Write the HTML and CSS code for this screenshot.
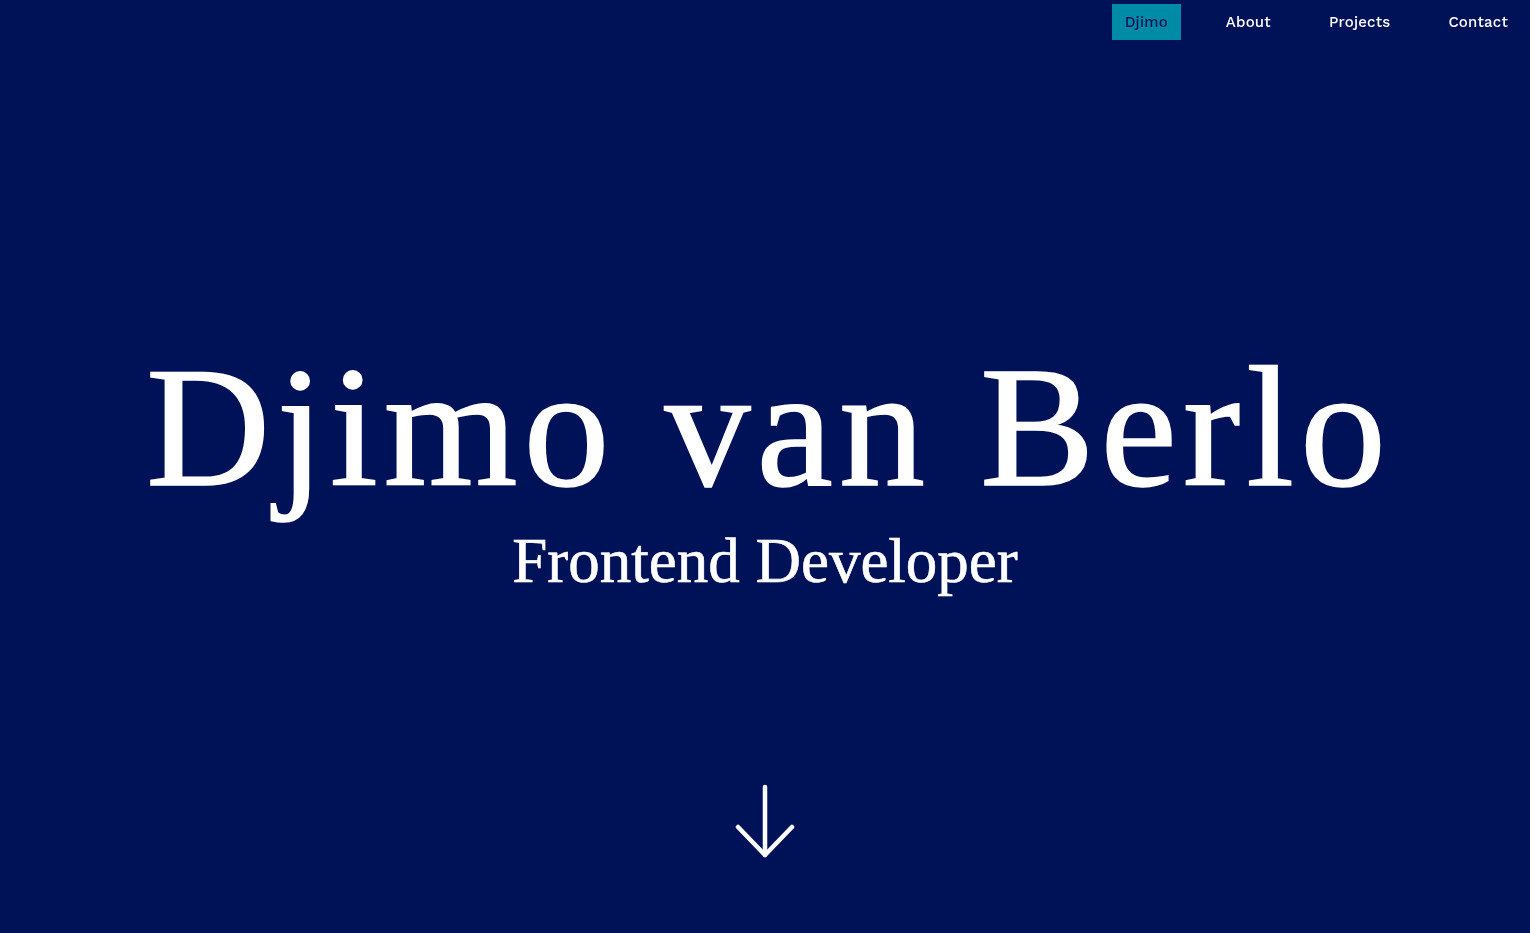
FILE: index.html
```html
<!DOCTYPE html>
<html lang="en">
<head>
<meta charset="utf-8">
<title>Djimo van Berlo</title>
<link rel="stylesheet" href="styles.css">
</head>
<body>
<header class="nav">
  <a class="nav-link nav-link-active" href="#">Djimo</a>
  <a class="nav-link" href="#">About</a>
  <a class="nav-link" href="#">Projects</a>
  <a class="nav-link" href="#">Contact</a>
</header>
<main class="hero">
  <h1 class="hero-title">Djimo van Berlo</h1>
  <p class="hero-subtitle">Frontend Developer</p>
  <a class="hero-arrow" href="#" aria-label="Scroll down">
    <svg width="60" height="76" viewBox="0 0 60 76" fill="none" stroke="#ffffff" stroke-width="4.5" stroke-linecap="round" stroke-linejoin="round">
      <path d="M30 3 V71"/>
      <path d="M3 43 L30 71 L57 43"/>
    </svg>
  </a>
</main>
</body>
</html>
```
FILE: styles.css
```css
* { box-sizing: border-box; }
html, body {
  margin: 0;
  padding: 0;
  background: #001257;
  height: 100%;
}
body {
  font-family: "Liberation Serif", "Times New Roman", serif;
  color: #ffffff;
  overflow: hidden;
}
.nav {
  position: fixed;
  top: 4px;
  right: 9px;
  display: flex;
  gap: 32px;
  z-index: 2;
}
.nav-link {
  display: block;
  height: 36px;
  line-height: 36px;
  padding: 0 13px;
  font-family: "Work Sans", Inter, "Open Sans", sans-serif;
  font-size: 15px;
  font-weight: 500;
  color: #ffffff;
  text-decoration: none;
  letter-spacing: 0.2px;
}
.nav-link-active {
  background: #008ba5;
  color: #001257;
}
.hero {
  height: 933px;
  display: flex;
  flex-direction: column;
  align-items: center;
  padding-top: 327px;
}
.hero-title {
  margin: 0;
  padding-left: 8px;
  font-weight: 400;
  font-size: 172px;
  line-height: 200px;
  letter-spacing: 6px;
  -webkit-text-stroke: 1.5px #ffffff;
}
.hero-subtitle {
  margin: 0;
  font-size: 63px;
  line-height: 70px;
  margin-top: -1px;
  -webkit-text-stroke: 0.6px #ffffff;
}
.hero-arrow {
  margin-top: 188px;
  display: block;
  line-height: 0;
}
```
